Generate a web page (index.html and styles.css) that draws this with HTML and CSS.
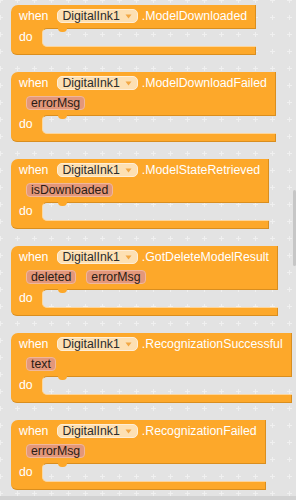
FILE: index.html
```html
<!DOCTYPE html>
<html lang="en">
<head>
<meta charset="UTF-8" />
<meta name="viewport" content="width=device-width, initial-scale=1" />
<title>DigitalInk1 event blocks</title>
<link rel="stylesheet" href="styles.css">
</head>
<body>
  <div class="workspace">

    <div class="block">
      <div class="head">
        <div class="row">
          <span class="kw">when</span>
          <span class="comp">DigitalInk1<svg class="caret" viewBox="0 0 7 5"><path d="M0.5 0.5 L6.5 0.5 L3.5 4.5 Z" /></svg></span>
          <span class="ev">.ModelDownloaded</span>
        </div>
      </div>
      <div class="do"><span class="kw">do</span><div class="slot"></div></div>
      <div class="foot"></div>
    </div>

    <div class="block">
      <div class="head">
        <div class="row">
          <span class="kw">when</span>
          <span class="comp">DigitalInk1<svg class="caret" viewBox="0 0 7 5"><path d="M0.5 0.5 L6.5 0.5 L3.5 4.5 Z" /></svg></span>
          <span class="ev">.ModelDownloadFailed</span>
        </div>
        <div class="params"><span class="param">errorMsg</span></div>
      </div>
      <div class="do"><span class="kw">do</span><div class="slot"></div></div>
      <div class="foot"></div>
    </div>

    <div class="block">
      <div class="head">
        <div class="row">
          <span class="kw">when</span>
          <span class="comp">DigitalInk1<svg class="caret" viewBox="0 0 7 5"><path d="M0.5 0.5 L6.5 0.5 L3.5 4.5 Z" /></svg></span>
          <span class="ev">.ModelStateRetrieved</span>
        </div>
        <div class="params"><span class="param">isDownloaded</span></div>
      </div>
      <div class="do"><span class="kw">do</span><div class="slot"></div></div>
      <div class="foot"></div>
    </div>

    <div class="block">
      <div class="head">
        <div class="row">
          <span class="kw">when</span>
          <span class="comp">DigitalInk1<svg class="caret" viewBox="0 0 7 5"><path d="M0.5 0.5 L6.5 0.5 L3.5 4.5 Z" /></svg></span>
          <span class="ev">.GotDeleteModelResult</span>
        </div>
        <div class="params"><span class="param">deleted</span><span class="param">errorMsg</span></div>
      </div>
      <div class="do"><span class="kw">do</span><div class="slot"></div></div>
      <div class="foot"></div>
    </div>

    <div class="block">
      <div class="head">
        <div class="row">
          <span class="kw">when</span>
          <span class="comp">DigitalInk1<svg class="caret" viewBox="0 0 7 5"><path d="M0.5 0.5 L6.5 0.5 L3.5 4.5 Z" /></svg></span>
          <span class="ev">.RecognizationSuccessful</span>
        </div>
        <div class="params"><span class="param">text</span></div>
      </div>
      <div class="do"><span class="kw">do</span><div class="slot"></div></div>
      <div class="foot"></div>
    </div>

    <div class="block">
      <div class="head">
        <div class="row">
          <span class="kw">when</span>
          <span class="comp">DigitalInk1<svg class="caret" viewBox="0 0 7 5"><path d="M0.5 0.5 L6.5 0.5 L3.5 4.5 Z" /></svg></span>
          <span class="ev">.RecognizationFailed</span>
        </div>
        <div class="params"><span class="param">errorMsg</span></div>
      </div>
      <div class="do"><span class="kw">do</span><div class="slot"></div></div>
      <div class="foot"></div>
    </div>

  </div>

  <!-- workspace scrollbars -->
  <div class="vscroll"></div>
  <div class="hscroll"></div>
</body>
</html>
```

FILE: styles.css
```css
html, body {
  margin: 0;
  height: 100%;
  overflow: hidden;
}

body {
  font-family: "Liberation Sans", Arial, sans-serif;
  font-size: 12.3px;
  background-color: #e3e3e3;
  background-image: url("data:image/svg+xml,%3Csvg xmlns='http://www.w3.org/2000/svg' width='17' height='17'%3E%3Cpath d='M6 8.5h5M8.5 6v5' stroke='%23f0f0f0' stroke-width='1'/%3E%3C/svg%3E");
  background-position: -8px -8px;
  background-attachment: fixed;
}

.workspace {
  display: flex;
  flex-direction: column;
  align-items: flex-start;
  gap: 17px;
  padding: 5px 0 0 11px;
}

/* event block */
.block {
  display: flex;
  flex-direction: column;
  width: max-content;
  color: #fff;
}

.head {
  background: #fda82a;
  border-top-left-radius: 7px;
  border-right: 1px solid #d98e1f;
  padding: 4px 8px 5px 8px;
}

.row {
  display: flex;
  align-items: center;
  height: 14px;
}

.kw {
  line-height: 14px;
}

.row .kw {
  margin-right: 9px;
}

.comp {
  display: flex;
  align-items: center;
  box-sizing: border-box;
  height: 14px;
  padding: 0 5px 0 4px;
  margin-right: 4px;
  background: #fde0b3;
  border: 1px solid #ffeed6;
  border-radius: 5px;
  color: #2b2b2b;
  line-height: 12px;
}

.caret {
  width: 7px;
  height: 5px;
  margin-left: 5px;
  fill: #f2a744;
}

.ev {
  line-height: 14px;
}

.params {
  display: flex;
  gap: 10px;
  margin-top: 6px;
  padding-left: 7px;
}

.param {
  box-sizing: border-box;
  height: 14px;
  padding: 0 4px;
  background: #e3977a;
  border: 1px solid #f0b79c;
  border-radius: 4px;
  color: #2a1c14;
  line-height: 12px;
}

/* statement input */
.do {
  display: flex;
  height: 19px;
  background: #fda82a;
}

.do .kw {
  width: 31px;
  box-sizing: border-box;
  padding-left: 8px;
  line-height: 19px;
}

.slot {
  flex: 1;
  position: relative;
  border-radius: 5px 0 0 5px;
  border-top: 1px solid #d98e1f;
  border-left: 1px solid #fbd9a4;
  border-bottom: 1px solid #fcd59c;
  background-color: #e3e3e3;
  background-image: url("data:image/svg+xml,%3Csvg xmlns='http://www.w3.org/2000/svg' width='17' height='17'%3E%3Cpath d='M6 8.5h5M8.5 6v5' stroke='%23f0f0f0' stroke-width='1'/%3E%3C/svg%3E");
  background-position: -8px -8px;
  background-attachment: fixed;
}

/* puzzle notch under the header */
.slot::before {
  content: "";
  position: absolute;
  left: 15px;
  top: -1px;
  width: 9px;
  height: 4px;
  background: #fda82a;
  border-radius: 0 0 4px 4px;
}

.foot {
  height: 8px;
  box-sizing: border-box;
  background: #fda82a;
  border-bottom-left-radius: 6px;
  border-right: 1px solid #d98e1f;
  border-bottom: 1px solid #d98e1f;
}

.vscroll {
  position: fixed;
  right: 0;
  top: 190px;
  width: 3px;
  height: 76px;
  background: #c6c6c6;
  border-radius: 2px;
}

.hscroll {
  position: fixed;
  left: 0;
  right: 0;
  bottom: 0;
  height: 4px;
  background: #d2d2d2;
}
```
